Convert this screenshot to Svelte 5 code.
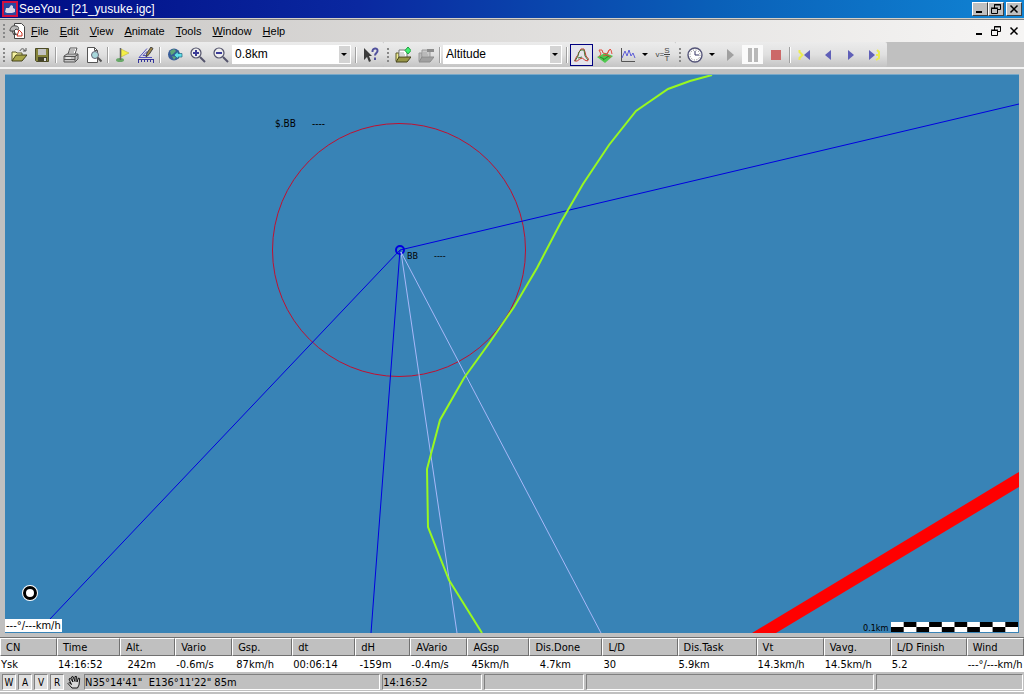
<script lang="ts">

    const menus = ['File', 'Edit', 'View', 'Animate', 'Tools', 'Window', 'Help']

    const columns = [
        { label: 'CN', value: 'Ysk', w: 57 },
        { label: 'Time', value: '14:16:52', w: 63 },
        { label: 'Alt.', value: '  242m', w: 55 },
        { label: 'Vario', value: '-0.6m/s', w: 57 },
        { label: 'Gsp.', value: ' 87km/h', w: 60 },
        { label: 'dt', value: '00:06:14', w: 63 },
        { label: 'dH', value: ' -159m', w: 55 },
        { label: 'AVario', value: '-0.4m/s', w: 57 },
        { label: 'AGsp', value: ' 45km/h', w: 62 },
        { label: 'Dis.Done', value: '   4.7km', w: 73 },
        { label: 'L/D', value: '30', w: 75 },
        { label: 'Dis.Task', value: '5.9km', w: 79 },
        { label: 'Vt', value: '14.3km/h', w: 67 },
        { label: 'Vavg.', value: '14.5km/h', w: 67 },
        { label: 'L/D Finish', value: '5.2', w: 76 },
        { label: 'Wind', value: '---°/---km/h', w: 57 },
    ]
    const total = columns.reduce((sum, c) => sum + c.w, 0)

    const toolGroups = [
        ['Open', 'Save'],
        ['Print', 'Preview'],
        ['Task', 'Measure'],
        ['Zoom all', 'Zoom in', 'Zoom out'],
    ]

    let scale = $state('0.8km')
    let colouring = $state('Altitude')

    const modes = ['W', 'A', 'V', 'R']

    const checks = Array.from({ length: 10 }, (_, i) => i)

</script>


{#snippet icon(name: string)}
    <svg class="icon" viewBox="0 0 16 16" aria-hidden="true">
        {#if name === 'Open'}
            <path d="M1 14V5h4l1 1h5v3" fill="#f4f2a0" stroke="#5c5a28" />
            <path d="M1 14l4-6h11l-5 6z" fill="#a8a648" stroke="#45431c" />
            <path d="M9 4c1-3 4-3 5 0M12 4h3V1" fill="none" stroke="#555" />
        {:else if name === 'Save'}
            <path d="M1.500 1.500h13v13h-12l-1-1z" fill="#85843c" stroke="#4c4b28" />
            <path d="M4 2h8v6H4z" fill="#c4c4c4" />
            <path d="M4 10h9v4H4z" fill="#44432a" />
            <path d="M10 11h2v3h-2z" fill="#ddd" />
        {:else if name === 'Print'}
            <path d="M5 7l2-6h7l-2 6" fill="#fff" stroke="#555" />
            <path d="M7 3h5M6 5h5" stroke="#777" />
            <path d="M1 9l3-2h11v5l-3 3H1z" fill="#c4c4c4" stroke="#555" />
            <path d="M1 9.500h11l3-2M1 12.500h11M12 9v5" fill="none" stroke="#555" />
            <path d="M3 11h5" stroke="#fff" />
        {:else if name === 'Preview'}
            <path d="M1.500.5h7l3 3v12h-10z" fill="#fff" stroke="#555" />
            <path d="M8.500.5v3h3" fill="none" stroke="#555" />
            <circle cx="9" cy="8" r="3.500" fill="#a8d8dc" stroke="#667" />
            <path d="M11.500 10.500l4 4" stroke="#555" stroke-width="2" />
        {:else if name === 'Task'}
            <ellipse cx="5" cy="13" rx="4" ry="2" fill="#68a868" />
            <path d="M6 2l8 4-8 4z" fill="#f4f048" stroke="#b0a830" stroke-width=".5" />
            <path d="M5.500 1v12" stroke="#666" stroke-width="1.500" />
        {:else if name === 'Measure'}
            <path d="M1 10.500L9 1.500M1 10.500h13M5 8.500h4v-4z" fill="none" stroke="#5454c0" />
            <path d="M8 10l1-4 4-6 2 1.500-4 6z" fill="#a08848" stroke="#444" />
            <path d="M0 12.500h16M.5 12v4M3.500 12v3M6.500 12v3M9.500 12v3M12.500 12v3M15.500 12v4" stroke="#34349c" />
        {:else if name === 'Zoom all'}
            <circle cx="7" cy="7.500" r="6" fill="#385c98" />
            <path d="M3 4l4-2 2 2-3 3-2 1zM5 9l4 1-2 3z" fill="#5ea878" />
            <path d="M7 8l4-3.500v2h4v3.500h-4v2z" fill="#60e0e8" stroke="#246480" stroke-width=".7" />
        {:else if name === 'Zoom in' || name === 'Zoom out'}
            <circle cx="6" cy="6" r="5" fill="#eee" stroke="#54546c" stroke-width="1.200" />
            <path d="M10 10l5 5" stroke="#54546c" stroke-width="2" />
            <path d="M3 6h6" stroke="#3c3c98" stroke-width="2" />
            {#if name === 'Zoom in'}
                <path d="M6 3v6" stroke="#3c3c98" stroke-width="2" />
            {/if}
        {:else if name === 'Help'}
            <path d="M1 1v12l3-3 2 5 2-1-2-5h3z" fill="#3c3c3c" />
            <path d="M9.500 5c-.5-4.500 5.500-4.500 5-1 0 2-2.500 2-2.500 4.500M12 10.500v2.500" fill="none" stroke="#50509c" stroke-width="2" />
        {:else if name === 'Add flight' || name === 'Close flight'}
            {@const on = name === 'Add flight'}
            <path d="M1 14V6h3v8" fill={on ? '#eeec90' : '#bbb'} stroke={on ? '#5a5828' : '#999'} />
            <path d="M4 12V3h8v8" fill={on ? '#fff' : '#c8c8c8'} stroke={on ? '#777' : '#999'} />
            <path d="M5 6h4M5 8h5" stroke="#aaa" />
            <path d="M1 15l3-5h12l-4 5z" fill={on ? '#989648' : '#a0a0a0'} stroke={on ? '#45431c' : '#8c8c8c'} />
            {#if on}
                <path d="M13 0l3 3.500L13 7l-3-3.500z" fill="#40f070" stroke="#20a040" />
            {:else}
                <path d="M9 2h7v3H9z" fill="#8c8c8c" />
            {/if}
        {:else if name === 'Route'}
            <path d="M1.500 12c1-3 3-4 3-6L7 2h3l1 3 1 4 2.500 3-1 2-3-1-2-2-3 1-2 2h-3z" fill="none" stroke="#c83830" />
            <path d="M1 14l3-5 1-4 2-2h3M10 3l1 6 3 4M4 11l4-1" fill="none" stroke="#487838" />
        {:else if name === '3D'}
            <path d="M0 10l8-4 8 3-8 7z" fill="#50c850" />
            <path d="M3 10l4 2M8 8l5 2M6 13l6-4" stroke="#288828" />
            <path d="M2 3h3l1 3 4 1 3-5 1 1 1 4M2 3l2 4-2 3M6 9l4-1 4 2M10 7l2-4" fill="none" stroke="#e05040" />
        {:else if name === 'Graph'}
            <path d="M1.500 1v13.500H15" fill="none" stroke="#555" />
            <path d="M2 11l3-7 2 5 2-6 2 6 2-3 2 5" fill="none" stroke="#5c5cd8" />
        {:else if name === 'Clock'}
            <circle cx="8" cy="8" r="7" fill="#fff" stroke="#545478" stroke-width="1.400" />
            <circle cx="8" cy="8" r="5" fill="none" stroke="#777" stroke-dasharray="1 1.618" />
            <path d="M8 4v4h4" fill="none" stroke="#303060" />
        {:else if name === 'Play'}
            <path d="M5 2l7 6-7 6z" fill="#a0a0a0" />
        {:else if name === 'Pause'}
            <path d="M3 1h4v14H3zM9 1h4v14H9z" fill="#b8b8b8" />
        {:else if name === 'Stop'}
            <path d="M3 3h10v10H3z" fill="#cc6868" />
        {:else if name === 'First'}
            <path d="M2.500 3v2l3 3-3 3v2" fill="none" stroke="#ecec50" stroke-width="2" />
            <path d="M13 3v10L7 8z" fill="#6060b8" />
        {:else if name === 'Back'}
            <path d="M11 3v10L5 8z" fill="#6060b8" />
        {:else if name === 'Forward'}
            <path d="M5 3v10l6-5z" fill="#6060b8" />
        {:else if name === 'Last'}
            <path d="M11 3l2 2v6l-3 2M10 8h3" fill="none" stroke="#ecec50" stroke-width="2" />
            <path d="M3 3v10l6-5z" fill="#6060b8" />
        {/if}
    </svg>
{/snippet}

{#snippet tool(name: string)}
    <button class="tool" aria-label={name}>{@render icon(name)}</button>
{/snippet}

{#snippet windowButtons()}
    <button aria-label="Minimize"><svg viewBox="0 0 12 10"><path d="M2 8h6" stroke="#000" stroke-width="2" /></svg></button>
    <button aria-label="Restore">
        <svg viewBox="0 0 12 10"><path d="M4.500 4V.5h6v5H8M4 1h7M1.500 4.500h6v5h-6zM1 4h7" fill="none" stroke="#000" /></svg>
    </button>
    <button class="close" aria-label="Close"><svg viewBox="0 0 12 10"><path d="M2.500 1.500l7 7M9.500 1.500l-7 7" stroke="#000" stroke-width="1.500" /></svg></button>
{/snippet}


<div class="app">

    <header class="title-bar">
        <svg class="logo" viewBox="0 0 16 16" aria-hidden="true">
            <path d="M1 1h14v14H1z" fill="#2848a0" stroke="#d01040" stroke-width="2" />
            <path d="M3 11l1-4h3l2-3 2 1v2l2 1v3l-3 1H5z" fill="#d8d8e8" />
        </svg>
        <h1>SeeYou - [21_yusuke.igc]</h1>
        <div class="window-buttons">{@render windowButtons()}</div>
    </header>

    <nav class="menu-bar">
        <span class="grip"></span>
        <svg class="doc" viewBox="0 0 16 16" aria-hidden="true">
            <path d="M5.500.5h7l3 3v12h-10z" fill="#fff" stroke="#444" />
            <path d="M8 13l2-6 3 3v3z" fill="none" stroke="#c83020" />
            <path d="M1 8c0-4 3-6 6-5 3 0 3 3 2 4L7 6 5 8z" fill="#b8b8b8" stroke="#444" />
            <path d="M3 8l2 4 3-1M5 8l2 4" fill="none" stroke="#444" />
        </svg>
        {#each menus as menu}
            <button class="menu"><u>{menu[0]}</u>{menu.slice(1)}</button>
        {/each}
        <div class="window-buttons flat">{@render windowButtons()}</div>
    </nav>

    <div class="toolbar-row">
        <div class="toolbar main" role="toolbar" aria-label="Main">
            <span class="grip"></span>
            {#each toolGroups as group, i}
                {#if i > 0}<span class="separator"></span>{/if}
                {#each group as name}{@render tool(name)}{/each}
            {/each}
            <div class="combo">
                <select aria-label="Scale" bind:value={scale}>
                    <option>0.8km</option>
                    <option>1.6km</option>
                </select>
            </div>
            <span class="separator"></span>
            {@render tool('Help')}
        </div>

        <div class="toolbar flight" role="toolbar" aria-label="Flight">
            <span class="grip"></span>
            {@render tool('Add flight')}
            {@render tool('Close flight')}
            <span class="separator"></span>
            <div class="combo">
                <select aria-label="Route colouring" bind:value={colouring}>
                    <option>Altitude</option>
                    <option>Vario</option>
                </select>
            </div>
            <span class="separator"></span>
            <button class="tool selected" aria-label="Route view">{@render icon('Route')}</button>
            {@render tool('3D')}
            {@render tool('Graph')}
            <button class="arrow" aria-label="Graph options"></button>
            <button class="tool formula" aria-label="Statistics">
                <span>v=</span><span class="fraction"><span>S</span><span>T</span></span>
            </button>
        </div>

        <div class="toolbar animate" role="toolbar" aria-label="Animate">
            <span class="grip"></span>
            {@render tool('Clock')}
            <button class="arrow" aria-label="Speed"></button>
            {@render tool('Play')}
            <button class="tool pressed" aria-label="Pause">{@render icon('Pause')}</button>
            {@render tool('Stop')}
            <span class="separator"></span>
            {@render tool('First')}
            {@render tool('Back')}
            {@render tool('Forward')}
            {@render tool('Last')}
        </div>
    </div>

    <main class="map">
        <svg viewBox="5 75 1014 558" role="img" aria-label="Flight map">
            <path d="M752 633L1019 472V487L776 633z" fill="#f00" />
            <circle cx="399" cy="250" r="126.500" fill="none" stroke="#c01030" />
            <g fill="none" stroke="#0000e0">
                <path d="M50 619L400 250L1019 104" />
                <path d="M400 250L371 633" />
                <circle cx="400" cy="250" r="4" stroke-width="2" />
            </g>
            <path d="M457 633L401 252L601 633" fill="none" stroke="#a8b8f8" />
            <path d="M712 75L690 81L668 89L636 111L609 145L583 184L561 222L537 268L514 307L490 342L464 378L440 420L427 469L428 527L449 580L482 633"
                fill="none" stroke="#98f820" stroke-width="2" />
            <circle cx="30" cy="593" r="5.500" fill="#fff" stroke="#fff" stroke-width="5" />
            <circle cx="30" cy="593" r="5.500" fill="#fff" stroke="#000" stroke-width="3" />
            <text x="275" y="127">$.BB</text>
            <text x="312" y="127">----</text>
            <g class="small">
                <text x="407" y="259">BB</text>
                <text x="434" y="259">----</text>
                <text x="863" y="631">0.1km</text>
            </g>
            <path d="M891 622h127v10H891z" fill="#fff" />
            {#each checks as i}
                <rect x={891 + i * 12.7} y={i % 2 ? 622 : 627} width="12.7" height="5" />
            {/each}
        </svg>
        <span class="wind">---°/---km/h</span>
    </main>

    <table>
        <colgroup>
            {#each columns as c}
                <col style:width="{c.w / total * 100}%">
            {/each}
        </colgroup>
        <thead>
            <tr>
                {#each columns as c}<th scope="col">{c.label}</th>{/each}
            </tr>
        </thead>
        <tbody>
            <tr>
                {#each columns as c}<td>{c.value}</td>{/each}
            </tr>
        </tbody>
    </table>

    <footer class="status-bar">
        {#each modes as mode}
            <button class="mode">{mode}</button>
        {/each}
        <button class="hand" aria-label="Pan">
            <svg viewBox="0 0 14 14" aria-hidden="true">
                <path d="M5 13L1 8.500l1-1 2.500 2L2 4l1.200-.8L6 7 4.500 2 6 1.500 8 6.500V1.500h1.500L10 7l1.500-4 1.200.5L12 10l-1.500 3z" fill="#d8d8d8" stroke="#000" stroke-width=".9" />
            </svg>
        </button>
        <span class="pane position">N35°14'41"&nbsp; E136°11'22" 85m</span>
        <span class="pane time">14:16:52</span>
        <span class="pane time"></span>
        <span class="pane wide"></span>
        <span class="pane last"></span>
    </footer>

</div>


<style>

    :global(body) {
        margin: 0;
    }

    .app {
        --face: #c0c0c0;
        --tahoma: "DejaVu Sans Condensed", "DejaVu Sans", sans-serif;

        display: flex;
        flex-direction: column;
        min-height: 100vh;
        background-color: var(--face);
        color: #000;
        font: 12px/14px "Liberation Sans", sans-serif;
    }

    button {
        padding: 0;
        border: none;
        background: none;
        color: inherit;
        font: inherit;
    }

    .title-bar {
        display: flex;
        align-items: center;
        gap: 1px;
        height: 18px;
        padding: 0 2px;
        background: linear-gradient(to right, #000c84, #0a28a0 35%, #0a60b8 70%, #1084d4);
        color: #fff;
        border-bottom: 1px solid #d4d0c8;
    }

    .logo {
        width: 16px;
        height: 16px;
    }

    h1 {
        margin: 0;
        font-size: 12px;
        font-weight: 400;
    }

    .window-buttons {
        display: flex;
        margin-left: auto;
    }

    .window-buttons button {
        display: flex;
        align-items: center;
        justify-content: center;
        width: 16px;
        height: 14px;
        box-sizing: border-box;
        background-color: var(--face);
        border: 1px solid;
        border-color: #fff #404040 #404040 #fff;
    }

    .window-buttons svg {
        width: 12px;
        height: 10px;
        flex: none;
    }

    .window-buttons .close {
        margin-left: 2px;
    }

    .window-buttons.flat button {
        background: none;
        border: none;
    }

    .menu-bar {
        display: flex;
        align-items: center;
        height: 22px;
        padding: 0 2px 0 3px;
        border-top: 1px solid #808080;
        background: linear-gradient(to right, #c8c6c4, #f6f5f4);
    }

    .grip {
        width: 2px;
        height: 14px;
        background: repeating-linear-gradient(#888 0 2px, transparent 2px 4px);
    }

    .doc {
        width: 16px;
        height: 16px;
        margin: 0 2px 0 4px;
    }

    .menu {
        padding: 0 4px;
        margin-right: 3px;
        font-size: 11px;
    }

    .toolbar-row {
        display: flex;
        height: 25px;
        border-bottom: 2px solid #f4f4f4;
    }

    .toolbar {
        display: flex;
        align-items: center;
        box-sizing: border-box;
        padding: 0 2px 0 3px;
        background: linear-gradient(#ececec, #e0e0e0 50%, #c4c4c4);
        border-radius: 0 2px 2px 0;
    }

    .toolbar .grip {
        margin-right: 2px;
    }

    .main {
        width: 384px;
    }

    .flight {
        width: 292px;
    }

    .animate {
        width: 211px;
    }

    .separator {
        width: 1px;
        height: 16px;
        margin: 0 2px;
        background-color: #a0a0a0;
        border-right: 1px solid #fff;
    }

    .tool {
        display: flex;
        align-items: center;
        justify-content: center;
        flex: none;
        width: 23px;
        height: 22px;
        box-sizing: border-box;
    }

    .icon {
        width: 16px;
        height: 16px;
        flex: none;
    }

    .selected {
        border: 1px solid #000080;
        background-color: #e4e4ec;
    }

    .pressed {
        width: 21px;
        height: 19px;
        margin: 0 1px;
        background-color: #fafafa;
    }

    .arrow {
        width: 12px;
        height: 16px;
        display: flex;
        align-items: center;
        justify-content: center;
    }

    .arrow::after,
    .combo::after {
        content: "";
        border: 3px solid transparent;
        border-top-color: #000;
        border-bottom-width: 0;
    }

    .formula {
        color: #444;
        font: 8px/7px "Liberation Sans", sans-serif;
    }

    .fraction {
        display: flex;
        flex-direction: column;
    }

    .fraction span:first-child {
        border-bottom: 1px solid #444;
    }

    .combo {
        position: relative;
        flex: 1;
        height: 17px;
        margin-right: 2px;
        border: 1px solid #fff;
        border-left: none;
    }

    .combo select {
        display: block;
        width: 100%;
        height: 17px;
        padding: 0 3px;
        border: none;
        border-radius: 0;
        background: linear-gradient(to left, #d4d4d4 11px, #fff 11px);
        appearance: none;
        color: #000;
        font: 12px/17px "Liberation Sans", sans-serif;
    }

    .combo::after {
        position: absolute;
        right: 3px;
        top: 7px;
        pointer-events: none;
    }

    .map {
        position: relative;
        flex: 1;
        margin: 5px 5px 4px;
        border-top: 1px solid #78a8c8;
        background-color: #3883b6;
    }

    .map > svg {
        display: block;
        width: 100%;
        height: auto;
    }

    .map text {
        font: 10px var(--tahoma);
    }

    .map .small text {
        font-size: 9px;
    }

    .wind {
        position: absolute;
        left: 0;
        bottom: 1px;
        padding: 0 1px;
        background-color: #fff;
        font: 11px/13px var(--tahoma);
    }

    table {
        width: 100%;
        table-layout: fixed;
        border-collapse: separate;
        border-spacing: 0;
        border-top: 1px solid #707070;
        font: 11px/14px var(--tahoma);
    }

    th,
    td {
        box-sizing: border-box;
        padding: 2px 0 0 1px;
        text-align: left;
        font-weight: 400;
        white-space: pre;
    }

    th {
        height: 18px;
        padding-left: 5px;
        border: 1px solid;
        border-color: #fff #707070 #707070 #fff;
    }

    td {
        height: 16px;
        background-color: #fff;
    }

    .status-bar {
        display: flex;
        align-items: center;
        gap: 2px;
        padding: 1px 1px 1px 2px;
        height: 17px;
        margin-bottom: 2px;
        border-bottom: 1px solid #fff;
        font: 11px/16px var(--tahoma);
    }

    .mode {
        width: 14px;
        height: 16px;
        box-sizing: border-box;
        background-color: #e0e0e0;
        border: 1px solid;
        border-color: #808080 #fff #fff #808080;
        font-size: 10px;
    }

    .hand {
        width: 16px;
        height: 14px;
    }

    .hand svg {
        display: block;
        width: 14px;
        height: 14px;
        margin: 0 auto;
    }

    .pane {
        height: 16px;
        box-sizing: border-box;
        border: 1px solid;
        border-color: #808080 #fff #fff #808080;
        white-space: nowrap;
    }

    .position {
        flex: 298;
    }

    .time {
        flex: 99;
    }

    .wide {
        flex: 290;
    }

    .last {
        flex: 147;
    }

</style>
